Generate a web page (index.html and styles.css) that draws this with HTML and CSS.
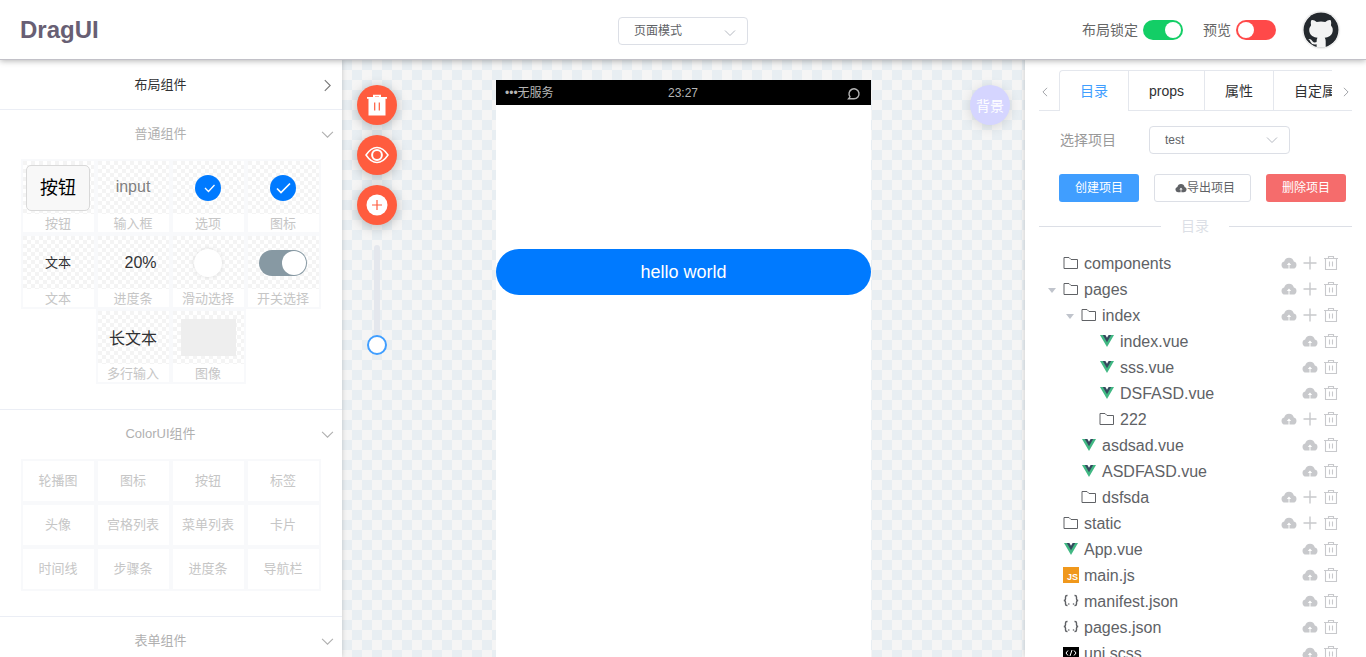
FILE: index.html
```
<!DOCTYPE html>
<html lang="zh">
<head>
<meta charset="utf-8">
<title>DragUI</title>
<link rel="stylesheet" href="styles.css">
</head>
<body>
<svg class="defs" width="0" height="0">
  <symbol id="down" viewBox="0 0 12 12"><path d="M1 3.5 6 8.5 11 3.5" fill="none" stroke="currentColor"/></symbol>
  <symbol id="right" viewBox="0 0 12 12"><path d="M3.5 1 8.5 6 3.5 11" fill="none" stroke="currentColor"/></symbol>
  <symbol id="left" viewBox="0 0 12 12"><path d="M8.5 1 3.5 6 8.5 11" fill="none" stroke="currentColor"/></symbol>
  <symbol id="cloud" viewBox="0 0 16 16"><path d="M4 13.5a3.500 3.500 0 0 1-.8-6.900 4.900 4.900 0 0 1 9.600 0 3.500 3.500 0 0 1-.8 6.900H8.500V10h1.700L8 7.500 5.800 10h1.700v3.500z" fill="currentColor"/></symbol>
  <symbol id="plus" viewBox="0 0 16 16"><path d="M8 1.500v13M1.500 8h13" stroke="currentColor" fill="none" stroke-width="1.400"/></symbol>
  <symbol id="trash" viewBox="0 0 16 16"><path d="M1 3.500h14M5.500 3.500v-2h5v2M2.500 3.500v11h11v-11M6.500 6.500v5M9.500 6.500v5" stroke="currentColor" fill="none" stroke-width="1.100"/></symbol>
  <symbol id="folder" viewBox="0 0 16 16"><path d="M1 13.500V2.500h5l2 2h6.500v9z" stroke="#606266" fill="none"/></symbol>
  <symbol id="vue" viewBox="0 0 16 16"><path d="M1 2h14L8 14z" fill="#41b883"/><path d="M3.800 2h8.400L8 9.300z" fill="#35495e"/><path d="M6.400 2h3.200L8 4.700z" fill="#fff"/></symbol>
  <symbol id="json" viewBox="0 0 16 16"><path d="M4.500 2.500H4Q2.500 2.500 2.500 4v2Q2.500 7.500.8 7.500 2.500 7.500 2.500 9v2Q2.500 12.500 4 12.500h.5M11.500 2.500h.5Q13.500 2.500 13.500 4v2q0 1.500 1.700 1.500Q13.500 7.500 13.500 9v2q0 1.500-1.500 1.500h-.5" stroke="#606266" fill="none" stroke-width="1.400"/><circle cx="5.800" cy="11" r=".8" fill="#606266"/><circle cx="10.500" cy="11" r=".8" fill="#606266"/></symbol>
</svg>

<header class="topbar">
  <h1 class="logo">DragUI</h1>
  <div class="select mode"><span>页面模式</span><svg><use href="#down"/></svg></div>
  <div class="controls">
    <span>布局锁定</span><i class="toggle on"></i>
    <span class="preview">预览</span><i class="toggle off"></i>
    <svg class="github" viewBox="0 0 36 36"><circle cx="18" cy="18" r="17.500" fill="#24292e"/><path d="M8.300 8.200Q11 7.600 13.700 10Q18 9 22.300 10Q25 7.600 27.700 8.200Q28.600 10.800 27.900 13.200Q31 17 29 21.500Q27.500 25 21.700 25.800Q22.700 27 22.700 29V35.200Q18 36.500 13.600 35.200V32.200Q9 33.200 7.600 29.900Q6.500 27.500 5.300 27.200Q7.800 26.500 9.500 29.200Q11 31.200 13.600 30Q13.500 27 14.500 25.800Q8.500 25 7 21.500Q5 17 8.100 13.200Q7.400 10.500 8.300 8.200Z" fill="#f3f3f3"/></svg>
  </div>
</header>

<div class="body">
  <aside class="left">
    <section>
      <div class="head dark"><span>布局组件</span><svg><use href="#right"/></svg></div>
    </section>
    <section>
      <div class="head"><span>普通组件</span><svg><use href="#down"/></svg></div>
      <div class="grid">
        <div class="cell"><div class="demo"><b class="demo-btn">按钮</b></div><p>按钮</p></div>
        <div class="cell"><div class="demo"><span class="demo-input">input</span></div><p>输入框</p></div>
        <div class="cell"><div class="demo"><svg class="check" viewBox="0 0 26 26"><circle cx="13" cy="13" r="13" fill="#007aff"/><path d="m10 13 3.500 3.500 6-6.500" fill="none" stroke="#fff" stroke-width="1.300"/></svg></div><p>选项</p></div>
        <div class="cell"><div class="demo"><svg class="check" viewBox="0 0 26 26"><circle cx="13" cy="13" r="13" fill="#007aff"/><path d="m7 13.500 4 4 9-9" fill="none" stroke="#fff" stroke-width="1.700"/></svg></div><p>图标</p></div>
        <div class="cell"><div class="demo"><span class="demo-text">文本</span></div><p>文本</p></div>
        <div class="cell"><div class="demo"><span class="demo-progress">20%</span></div><p>进度条</p></div>
        <div class="cell"><div class="demo"><i class="knob"></i></div><p>滑动选择</p></div>
        <div class="cell"><div class="demo"><i class="demo-switch"></i></div><p>开关选择</p></div>
        <div class="cell"><div class="demo"><span class="demo-long">长文本</span></div><p>多行输入</p></div>
        <div class="cell"><div class="demo"><i class="demo-image"></i></div><p>图像</p></div>
      </div>
    </section>
    <section>
      <div class="head"><span>ColorUI组件</span><svg><use href="#down"/></svg></div>
      <div class="grid">
        <div class="item">轮播图</div><div class="item">图标</div><div class="item">按钮</div><div class="item">标签</div>
        <div class="item">头像</div><div class="item">宫格列表</div><div class="item">菜单列表</div><div class="item">卡片</div>
        <div class="item">时间线</div><div class="item">步骤条</div><div class="item">进度条</div><div class="item">导航栏</div>
      </div>
    </section>
    <section>
      <div class="head"><span>表单组件</span><svg><use href="#down"/></svg></div>
    </section>
  </aside>

  <main class="canvas">
    <div class="tools">
      <div class="round"><svg viewBox="0 0 22 22"><path d="M7 3V.8h8V3h6v1.800h-1.500V21.500h-17V4.800H1V3zM9 3h4v-.6H9z" fill="#fff"/><path d="M8.700 8.500v8M13.300 8.500v8" stroke="#ff5c3e" stroke-width="1.200"/></svg></div>
      <div class="round"><svg class="eye" viewBox="0 0 24 24"><path d="M1 12Q6 4.500 12 4.500T23 12Q18 19.500 12 19.500T1 12Z" fill="none" stroke="#fff" stroke-width="1.500"/><circle cx="12" cy="12" r="4.900" fill="none" stroke="#fff" stroke-width="2"/></svg></div>
      <div class="round"><svg viewBox="0 0 22 22"><circle cx="11" cy="11" r="10.500" fill="#fff"/><path d="M11 6v10M6 11h10" stroke="#ff5c3e" stroke-width="1.200"/></svg></div>
      <div class="slider"><i></i></div>
    </div>
    <div class="phone">
      <div class="status"><span>•••无服务</span><span>23:27</span><svg viewBox="0 0 14 14"><path d="M1.500 11.800H7A5 5 0 1 0 3 9.800Z" fill="none" stroke="#b5b5b5" stroke-width="1.400"/></svg></div>
      <div class="hello">hello world</div>
    </div>
    <div class="round bg">背景</div>
  </main>

  <aside class="right">
    <nav class="tabs">
      <span class="nav"><svg><use href="#left"/></svg></span>
      <div class="tab-scroll">
        <span class="tab active">目录</span><span class="tab">props</span><span class="tab">属性</span><span class="tab">自定属性</span>
      </div>
      <span class="nav"><svg><use href="#right"/></svg></span>
    </nav>
    <div class="project"><label>选择项目</label><div class="select"><span>test</span><svg><use href="#down"/></svg></div></div>
    <div class="actions">
      <button class="primary">创建项目</button>
      <button class="plain"><svg><use href="#cloud"/></svg>导出项目</button>
      <button class="danger">删除项目</button>
    </div>
    <div class="divider"><span>目录</span></div>
    <div class="tree">
      <div class="row"><i></i><svg><use href="#folder"/></svg><span>components</span><svg><use href="#cloud"/></svg><svg><use href="#plus"/></svg><svg><use href="#trash"/></svg></div>
      <div class="row"><i class="caret"></i><svg><use href="#folder"/></svg><span>pages</span><svg><use href="#cloud"/></svg><svg><use href="#plus"/></svg><svg><use href="#trash"/></svg></div>
      <div class="row l2"><i class="caret"></i><svg><use href="#folder"/></svg><span>index</span><svg><use href="#cloud"/></svg><svg><use href="#plus"/></svg><svg><use href="#trash"/></svg></div>
      <div class="row l3"><i></i><svg><use href="#vue"/></svg><span>index.vue</span><svg><use href="#cloud"/></svg><svg><use href="#trash"/></svg></div>
      <div class="row l3"><i></i><svg><use href="#vue"/></svg><span>sss.vue</span><svg><use href="#cloud"/></svg><svg><use href="#trash"/></svg></div>
      <div class="row l3"><i></i><svg><use href="#vue"/></svg><span>DSFASD.vue</span><svg><use href="#cloud"/></svg><svg><use href="#trash"/></svg></div>
      <div class="row l3"><i></i><svg><use href="#folder"/></svg><span>222</span><svg><use href="#cloud"/></svg><svg><use href="#plus"/></svg><svg><use href="#trash"/></svg></div>
      <div class="row l2"><i></i><svg><use href="#vue"/></svg><span>asdsad.vue</span><svg><use href="#cloud"/></svg><svg><use href="#trash"/></svg></div>
      <div class="row l2"><i></i><svg><use href="#vue"/></svg><span>ASDFASD.vue</span><svg><use href="#cloud"/></svg><svg><use href="#trash"/></svg></div>
      <div class="row l2"><i></i><svg><use href="#folder"/></svg><span>dsfsda</span><svg><use href="#cloud"/></svg><svg><use href="#plus"/></svg><svg><use href="#trash"/></svg></div>
      <div class="row"><i></i><svg><use href="#folder"/></svg><span>static</span><svg><use href="#cloud"/></svg><svg><use href="#plus"/></svg><svg><use href="#trash"/></svg></div>
      <div class="row"><i></i><svg><use href="#vue"/></svg><span>App.vue</span><svg><use href="#cloud"/></svg><svg><use href="#trash"/></svg></div>
      <div class="row"><i></i><b class="js">JS</b><span>main.js</span><svg><use href="#cloud"/></svg><svg><use href="#trash"/></svg></div>
      <div class="row"><i></i><svg><use href="#json"/></svg><span>manifest.json</span><svg><use href="#cloud"/></svg><svg><use href="#trash"/></svg></div>
      <div class="row"><i></i><svg><use href="#json"/></svg><span>pages.json</span><svg><use href="#cloud"/></svg><svg><use href="#trash"/></svg></div>
      <div class="row"><i></i><svg viewBox="0 0 16 16"><path d="M0 2h16v12H0z" fill="#000"/><path d="M5 5.500 3 8l2 2.500M11 5.500 13 8l-2 2.500M9 5 7 11" stroke="#fff" fill="none"/></svg><span>uni.scss</span><svg><use href="#cloud"/></svg><svg><use href="#trash"/></svg></div>
    </div>
  </aside>
</div>
</body>
</html>
```
FILE: styles.css
```
* { box-sizing: border-box; }
body {
  margin: 0;
  height: 657px;
  overflow: hidden;
  display: flex;
  flex-direction: column;
  background: #fff;
  font-family: "Liberation Sans", "Noto Sans CJK SC", sans-serif;
  font-size: 14px;
  color: #303133;
}
p, h1 { margin: 0; }
i, b { font-style: normal; font-weight: normal; }
svg { display: block; flex: none; }
.defs { position: absolute; }

.topbar {
  flex: none;
  height: 60px;
  padding: 0 27px 0 20px;
  display: grid;
  grid-template-columns: 598px 130px 1fr;
  align-items: center;
  border-bottom: 1px solid #c2c1c8;
  box-shadow: 0 1px 6px rgba(0, 0, 0, .3);
  background: #fff;
  z-index: 2;
}
.logo { font-size: 24px; line-height: 30px; color: #685f74; }
.select {
  height: 28px;
  display: flex;
  align-items: center;
  justify-content: space-between;
  padding: 0 11px 0 15px;
  border: 1px solid #dcdfe6;
  border-radius: 4px;
  font-size: 12px;
  line-height: 26px;
  color: #606266;
}
.select svg { width: 12px; height: 12px; color: #b4b8c0; }
.mode { margin-top: 3px; }
.mode svg { margin-top: 3px; }
.controls { display: flex; align-items: center; justify-content: flex-end; color: #666; line-height: 20px; }
.toggle { width: 40px; height: 20px; border-radius: 10px; margin-left: 5px; padding: 2px; display: flex; }
.toggle::after { content: ""; width: 16px; height: 16px; border-radius: 50%; background: #fff; }
.on { background: #13ce66; justify-content: flex-end; }
.off { background: #ff4949; }
.preview { margin-left: 20px; }
.github { width: 36px; height: 36px; margin-left: 27px; border-radius: 50%; box-shadow: 0 0 2px rgba(0, 0, 0, .25); }

.body { flex: 1; min-height: 0; display: flex; }
.left { width: 342px; flex: none; overflow: hidden; box-shadow: 0 0 5px rgba(0, 0, 0, .2); z-index: 1; background: #fff; }
.left section + section { border-top: 1px solid #ebeef5; }
.head { height: 49px; display: flex; align-items: center; padding: 0 8px 2px 0; font-size: 13px; color: #b0b0b0; }
.head span { flex: 1; text-align: center; line-height: 20px; }
.head svg { width: 13px; height: 13px; margin-top: 2px; }
.head.dark { color: #303133; padding-bottom: 0; }
.head.dark svg { color: #777; margin-top: 1px; }
.grid { display: flex; flex-wrap: wrap; justify-content: center; width: 300px; margin: 0 0 25px 21px; }
.cell { width: 75px; height: 75px; border: 2px solid #f8f9fb; overflow: hidden; }
.demo {
  height: 53px;
  display: flex;
  align-items: center;
  justify-content: center;
  padding-right: 1px;
  background: repeating-conic-gradient(#fff 0 25%, #f4f4f4 0 50%) 0 0 / 8px 8px;
}
.cell p { height: 18px; line-height: 19px; background: #fff; text-align: center; font-size: 13px; color: #c6c6c6; padding-right: 1px; }
.demo-btn { width: 64px; height: 46px; flex: none; border: 1px solid #d9d9d9; border-radius: 5px; background: #f8f8f8; color: #000; font-size: 18px; line-height: 44px; text-align: center; }
.demo-input { font-size: 16px; color: #808080; padding-bottom: 2px; }
.demo-text { font-size: 13px; padding-bottom: 2px; }
.demo-progress { font-size: 16px; padding-left: 15px; }
.demo-long { font-size: 16px; padding-bottom: 1px; }
.check { width: 26px; height: 26px; }
.knob { width: 28px; height: 28px; border-radius: 50%; background: #fff; box-shadow: 0 0 4px rgba(0, 0, 0, .12); }
.demo-switch { width: 48px; height: 26px; border-radius: 13px; background: #8799a3; display: flex; justify-content: flex-end; padding: 1px; }
.demo-switch::after { content: ""; width: 24px; height: 24px; border-radius: 50%; background: #fff; }
.demo-image { width: 55px; height: 37px; background: #eee; }
.item { width: 75px; height: 44px; border: 2px solid #f8f9fb; line-height: 39px; text-align: center; font-size: 13px; color: #c6c6c6; padding-right: 1px; }

.canvas {
  width: 683px;
  flex: none;
  display: flex;
  align-items: flex-start;
  padding: 20px 15px 0;
  background: repeating-conic-gradient(#f5f5f5 0 25%, #e8eef2 0 50%) 0 0 / 20px 20px;
}
.tools { width: 139px; padding-top: 5px; display: flex; flex-direction: column; gap: 10px; }
.round {
  width: 40px;
  height: 40px;
  border-radius: 50%;
  background: #ff5c3e;
  display: flex;
  align-items: center;
  justify-content: center;
  box-shadow: 0 2px 12px rgba(0, 0, 0, .25);
}
.round svg { width: 22px; height: 22px; margin-right: 1px; }
.round .eye { width: 24px; height: 24px; }
.slider { width: 6px; height: 110px; margin: 10px 0 0 17px; border-radius: 3px; background: linear-gradient(#e4e7ed 0 0) 0 0 / 6px 100px no-repeat; display: flex; align-items: flex-end; justify-content: center; }
.slider i { flex: none; width: 20px; height: 20px; border: 2px solid #409eff; border-radius: 50%; background: #fff; }
.phone { width: 375px; height: 577px; background: #fff; }
.status { height: 25px; padding: 2px 10px 0 9px; background: #000; color: #b5b5b5; font-size: 12px; line-height: 23px; display: grid; grid-template-columns: 1fr auto 1fr; align-items: center; }
.status svg { width: 14px; height: 14px; justify-self: end; }
.hello { height: 46px; margin-top: 144px; border-radius: 23px; background: #007aff; color: #fff; font-size: 18px; line-height: 46px; text-align: center; }
.bg { margin: 5px 0 0 99px; background: #d5d5ff; color: #fff; box-shadow: 0 2px 12px rgba(0, 0, 0, .13); }

.right { width: 341px; flex: none; padding: 10px 14px 0; overflow: hidden; box-shadow: 0 0 5px rgba(0, 0, 0, .18); z-index: 1; background: #fff; }
.tabs { display: flex; height: 41px; }
.nav { width: 20px; border-bottom: 1px solid #e4e7ed; display: flex; align-items: center; justify-content: center; color: #909399; }
.nav:first-child { padding-right: 9px; }
.nav:last-child { padding-left: 8px; }
.nav svg { width: 10px; height: 10px; margin-top: 3px; }
.tab-scroll { flex: 1; min-width: 0; overflow: hidden; display: flex; border: 1px solid #e4e7ed; border-width: 1px 0 0 1px; border-radius: 4px 0 0 0; }
.tab { flex: none; padding: 0 20px; line-height: 40px; border-bottom: 1px solid #e4e7ed; border-left: 1px solid #e4e7ed; }
.tab.active { color: #409eff; border-color: #fff; border-left: 0; }
.project { display: flex; align-items: center; margin-top: 15px; padding-left: 21px; color: #999; line-height: 28px; }
.project label { width: 89px; }
.project .select { width: 141px; }
.actions { display: flex; gap: 15px; margin: 20px 0 0 20px; }
.actions button { font: 12px/26px "Liberation Sans", "Noto Sans CJK SC", sans-serif; width: 80px; height: 28px; padding: 0; border-radius: 3px; border: 0; color: #fff; }
.actions .primary { background: #409eff; }
.actions .danger { background: #f56c6c; }
.actions .plain { width: 97px; background: #fff; border: 1px solid #dcdfe6; color: #606266; display: flex; align-items: center; justify-content: center; padding-left: 5px; }
.actions svg { width: 12px; height: 12px; }
.divider { display: flex; align-items: center; height: 24px; margin: 12px 0; color: #dcdfe6; line-height: 24px; }
.divider::before { content: ""; width: 122px; height: 1px; background: #dcdfe6; }
.divider::after { content: ""; flex: 1; height: 1px; background: #dcdfe6; }
.divider span { padding: 0 20px; }
.tree { font-size: 16px; color: #606266; }
.row { height: 26px; display: flex; align-items: center; padding: 0 13px 0 5px; }
.l2 { padding-left: 23px; }
.l3 { padding-left: 41px; }
.row > i { width: 19px; flex: none; }
.caret::before { content: ""; display: block; width: 0; border: 4px solid transparent; border-top: 5px solid #c0c4cc; border-bottom: 0; margin-top: 2px; margin-left: 4px; }
.row svg { width: 16px; height: 16px; }
.row span { flex: 1; margin-left: 5px; line-height: 24px; padding-top: 2px; }
.row span ~ svg { color: #c8c9cc; margin-left: 5px; }
.js { width: 16px; height: 16px; background: #f0981c; color: #fff; font-size: 9px; font-weight: bold; line-height: 20px; text-align: right; padding-right: 1px; flex: none; }
```
